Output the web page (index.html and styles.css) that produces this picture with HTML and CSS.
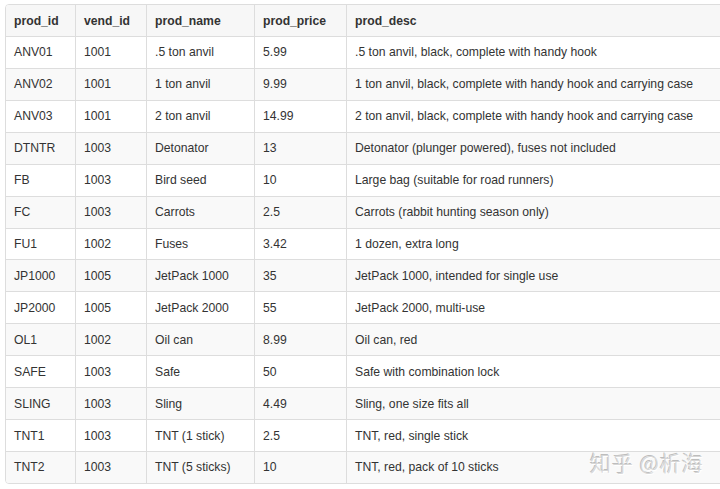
FILE: index.html
```
<!DOCTYPE html>
<html>
<head>
<meta charset="utf-8">
<link rel="stylesheet" href="styles.css">
</head>
<body>
<div class="page">
  <div class="table-wrap">
    <table class="data">
      <colgroup>
        <col class="c1"><col class="c2"><col class="c3"><col class="c4"><col class="c5">
      </colgroup>
      <thead>
        <tr><th>prod_id</th><th>vend_id</th><th>prod_name</th><th>prod_price</th><th>prod_desc</th></tr>
      </thead>
      <tbody>
        <tr><td>ANV01</td><td>1001</td><td>.5 ton anvil</td><td>5.99</td><td>.5 ton anvil, black, complete with handy hook</td></tr>
        <tr><td>ANV02</td><td>1001</td><td>1 ton anvil</td><td>9.99</td><td>1 ton anvil, black, complete with handy hook and carrying case</td></tr>
        <tr><td>ANV03</td><td>1001</td><td>2 ton anvil</td><td>14.99</td><td>2 ton anvil, black, complete with handy hook and carrying case</td></tr>
        <tr><td>DTNTR</td><td>1003</td><td>Detonator</td><td>13</td><td>Detonator (plunger powered), fuses not included</td></tr>
        <tr><td>FB</td><td>1003</td><td>Bird seed</td><td>10</td><td>Large bag (suitable for road runners)</td></tr>
        <tr><td>FC</td><td>1003</td><td>Carrots</td><td>2.5</td><td>Carrots (rabbit hunting season only)</td></tr>
        <tr><td>FU1</td><td>1002</td><td>Fuses</td><td>3.42</td><td>1 dozen, extra long</td></tr>
        <tr><td>JP1000</td><td>1005</td><td>JetPack 1000</td><td>35</td><td>JetPack 1000, intended for single use</td></tr>
        <tr><td>JP2000</td><td>1005</td><td>JetPack 2000</td><td>55</td><td>JetPack 2000, multi-use</td></tr>
        <tr><td>OL1</td><td>1002</td><td>Oil can</td><td>8.99</td><td>Oil can, red</td></tr>
        <tr><td>SAFE</td><td>1003</td><td>Safe</td><td>50</td><td>Safe with combination lock</td></tr>
        <tr><td>SLING</td><td>1003</td><td>Sling</td><td>4.49</td><td>Sling, one size fits all</td></tr>
        <tr><td>TNT1</td><td>1003</td><td>TNT (1 stick)</td><td>2.5</td><td>TNT, red, single stick</td></tr>
        <tr><td>TNT2</td><td>1003</td><td>TNT (5 sticks)</td><td>10</td><td>TNT, red, pack of 10 sticks</td></tr>
      </tbody>
    </table>
  </div>
  <div class="watermark">知乎 @析海</div>
</div>
</body>
</html>
```
FILE: styles.css
```
html, body {
  margin: 0;
  padding: 0;
  background: #ffffff;
  overflow: hidden;
}
.page {
  position: relative;
  width: 720px;
  height: 489px;
  padding: 4px 0 0 5px;
  box-sizing: border-box;
  overflow: hidden;
}
.table-wrap {
  width: 730px;
  border: 1px solid #dddddd;
  border-radius: 4px;
  overflow: hidden;
}
.data {
  border-collapse: separate;
  border-spacing: 0;
  table-layout: fixed;
  width: 100%;
  font-family: "Liberation Sans", Arial, Helvetica, sans-serif;
  font-size: 12.2px;
  color: #333333;
}
.c1 { width: 69px; }
.c2 { width: 71px; }
.c3 { width: 108px; }
.c4 { width: 92px; }
.data th, .data td {
  padding: 0 8px;
  height: 31.93px;
  line-height: 16px;
  text-align: left;
  vertical-align: middle;
  white-space: nowrap;
  border-left: 1px solid #dddddd;
  border-top: 1px solid #dddddd;
  box-sizing: border-box;
}
.data th:first-child, .data td:first-child {
  border-left: none;
}
.data thead th {
  border-top: none;
  height: 31px;
  font-weight: bold;
  background: #f7f7f7;
}
.data tbody tr:nth-child(even) td {
  background: #f9f9f9;
}
.watermark {
  position: absolute;
  left: 590px;
  top: 447px;
  font-family: "Noto Sans CJK SC", sans-serif;
  font-size: 21px;
  font-weight: 300;
  color: #d6d6d6;
  letter-spacing: 1px;
  text-shadow: 1px 1px 0 #ffffff, -1px -1px 0 #bdbdbd;
}
```
